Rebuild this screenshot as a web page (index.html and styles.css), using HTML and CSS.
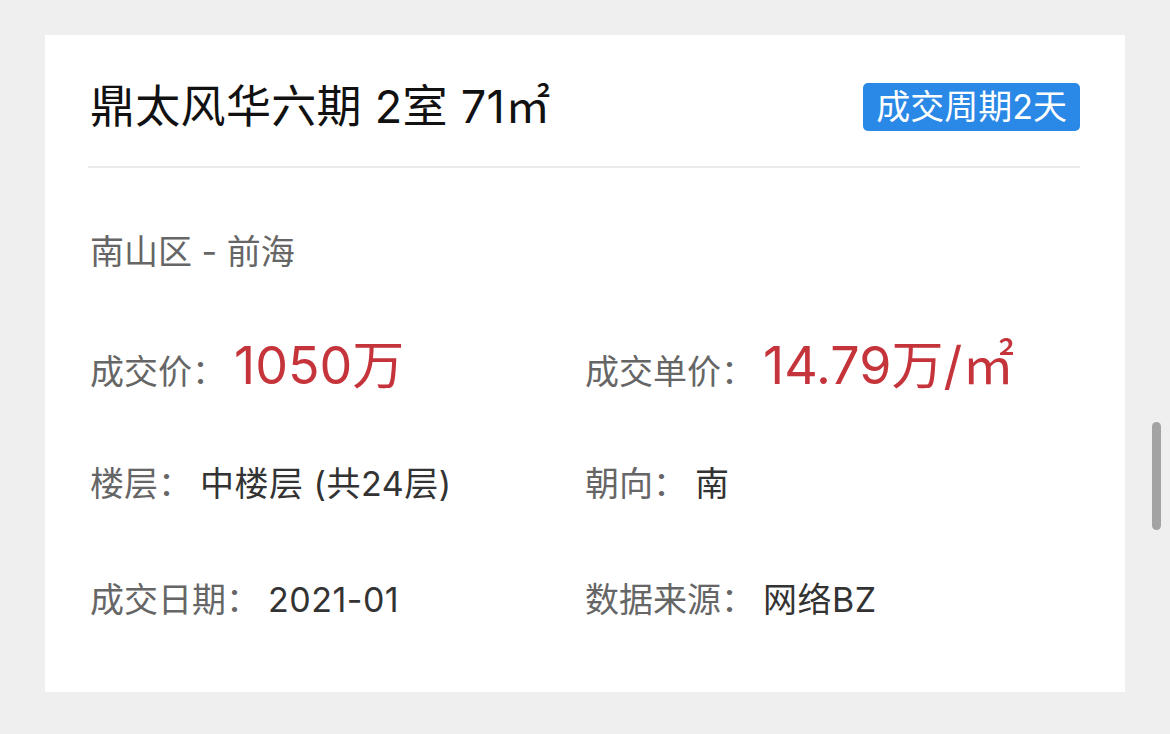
FILE: index.html
```html
<!DOCTYPE html>
<html lang="zh-CN">
<head>
<meta charset="utf-8">
<title>成交详情</title>
<link rel="stylesheet" href="styles.css">
</head>
<body>
<div class="page">
  <div class="card">
    <div class="header">
      <div class="title">鼎太风华六期 2室 71㎡</div>
      <div class="badge">成交周期2天</div>
    </div>
    <div class="location">南山区 - 前海</div>
    <div class="grid">
      <div class="item big">
        <span class="label">成交价：</span><span class="price">1050万</span>
      </div>
      <div class="item big">
        <span class="label">成交单价：</span><span class="price">14.79万/㎡</span>
      </div>
      <div class="item">
        <span class="label">楼层：</span><span class="value">中楼层 (共24层)</span>
      </div>
      <div class="item">
        <span class="label">朝向：</span><span class="value">南</span>
      </div>
      <div class="item">
        <span class="label">成交日期：</span><span class="value">2021-01</span>
      </div>
      <div class="item">
        <span class="label">数据来源：</span><span class="value">网络BZ</span>
      </div>
    </div>
  </div>
  <div class="scrollbar"></div>
</div>
</body>
</html>
```

FILE: styles.css
```css
html, body {
  margin: 0;
  padding: 0;
  background: #efefef;
}
body {
  font-family: Inter, "Noto Sans CJK SC", sans-serif;
  width: 1170px;
  height: 734px;
  overflow: hidden;
}
.page {
  position: relative;
  padding: 35px 45px 0 45px;
}
.card {
  background: #ffffff;
  width: 1080px;
  height: 657px;
  box-sizing: border-box;
  padding: 0 45px 0 45px;
}
.header {
  display: flex;
  justify-content: space-between;
  align-items: center;
  height: 133px;
  border-bottom: 2px solid #ebebeb;
  padding-top: 13px;
  box-sizing: border-box;
  margin-left: -2px;
  padding-left: 2px;
}
.title {
  font-size: 45px;
  line-height: 52px;
  color: #111111;
  letter-spacing: 0.3px;
}
.badge {
  background: #2a88e6;
  color: #ffffff;
  font-size: 34px;
  line-height: 48px;
  height: 48px;
  padding: 0 13px;
  border-radius: 5px;
}
.location {
  margin-top: 64px;
  font-size: 34px;
  line-height: 40px;
  color: #666666;
}
.grid {
  display: grid;
  grid-template-columns: 495px 495px;
  grid-auto-rows: 116px;
  margin-top: 38px;
}
.item {
  display: flex;
  align-items: baseline;
  align-self: center;
  font-size: 34px;
  line-height: 44px;
}
.big {
  margin-top: -4px;
}
.label {
  color: #666666;
  margin-right: 8px;
}
.value {
  color: #333333;
  letter-spacing: 0.5px;
}
.price {
  color: #c6343b;
  font-size: 52px;
  line-height: 60px;
}
.scrollbar {
  position: absolute;
  left: 1152px;
  top: 422px;
  width: 9px;
  height: 108px;
  border-radius: 5px;
  background: #a3a3a3;
}
```
